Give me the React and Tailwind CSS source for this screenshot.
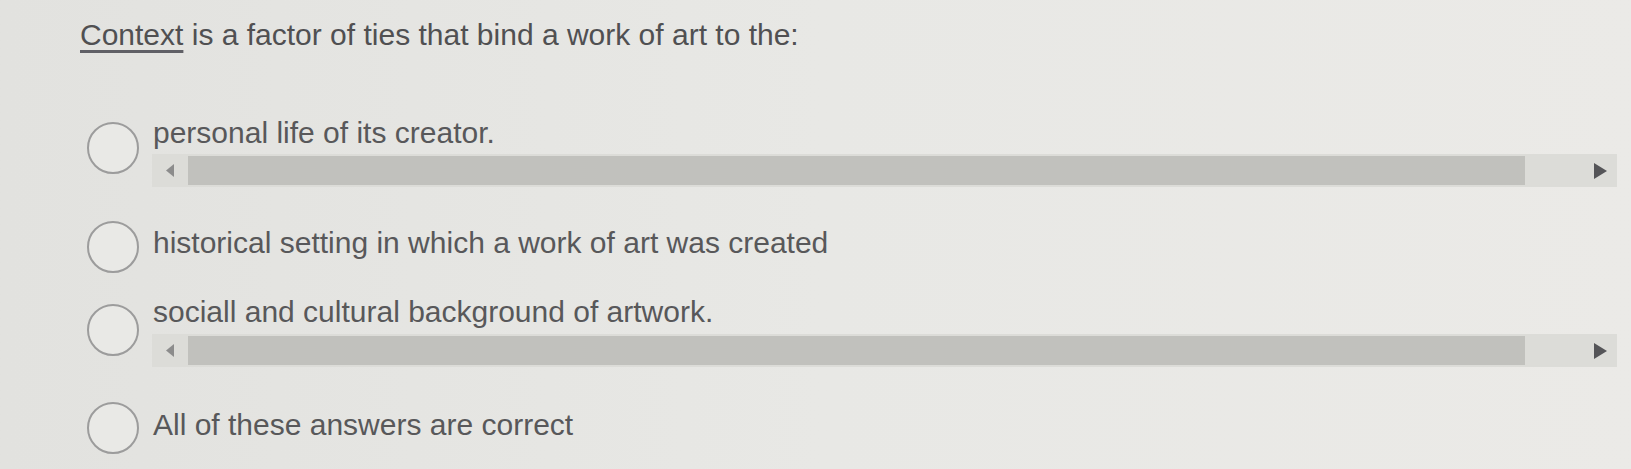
export default function App() {
  const rows = [
    { text: "personal life of its creator.", scroll: true, row: "mt-[64px]", circle: "mt-[6px]", textMt: "mt-0", trackMt: "mt-[4px]" },
    { text: "historical setting in which a work of art was created", scroll: false, row: "mt-[34px]", circle: "mt-0", textMt: "mt-[5px]", trackMt: "" },
    { text: "sociall and cultural background of artwork.", scroll: true, row: "mt-[22px]", circle: "mt-[9px]", textMt: "mt-0", trackMt: "mt-[5px]" },
    { text: "All of these answers are correct", scroll: false, row: "mt-[35px]", circle: "mt-0", textMt: "mt-[6px]", trackMt: "" },
  ];
  return (
    <div
      className="w-[1631px] h-[469px] overflow-hidden bg-gradient-to-r from-[#e2e2df] via-[#e8e8e5] to-[#ebeae7] text-[#58585a] pl-[80px] pt-[18px]"
      style={{ fontFamily: '"Liberation Sans", Arial, sans-serif' }}
    >
      <div className="text-[30px] leading-[34px] text-[#505052] whitespace-nowrap">
        <span className="underline decoration-[3px] underline-offset-[5px] decoration-[#606066]">Context</span> is a factor of ties that bind a work of art to the:
      </div>
      {rows.map((o, i) => (
        <div key={i} className={`${o.row} flex items-start`}>
          <div className={`${o.circle} ml-[7px] w-[52px] h-[52px] shrink-0 rounded-full border-2 border-[#9c9c9c] bg-[#e9e9e6]`} />
          <div className={`${o.textMt} ml-[13px] flex flex-col`}>
            <div className="text-[30px] leading-[34px] whitespace-nowrap pl-[1px]">{o.text}</div>
            {o.scroll && (
              <div className={`${o.trackMt} w-[1465px] h-[33px] bg-[#dcdcd8] flex items-center`}>
                <div className="w-[36px] h-full flex items-center justify-center">
                  <svg width="8" height="13" viewBox="0 0 8 13">
                    <path d="M8 0 L0 6.5 L8 13 Z" fill="#8c8c8c" />
                  </svg>
                </div>
                <div className="w-[1337px] h-[29px] bg-[#c1c1bd]" />
                <div className="flex-1 h-full flex items-center justify-end pr-[10px]">
                  <svg width="13" height="16" viewBox="0 0 13 16">
                    <path d="M0 0 L13 8 L0 16 Z" fill="#555558" />
                  </svg>
                </div>
              </div>
            )}
          </div>
        </div>
      ))}
    </div>
  );
}
